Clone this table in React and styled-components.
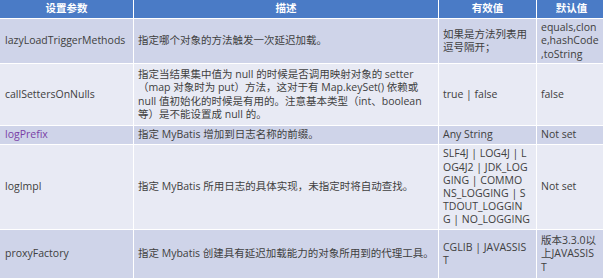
import React from "react";
import styled, { createGlobalStyle } from "styled-components";

const GlobalStyle = createGlobalStyle`
	html, body {
		margin: 0;
		padding: 0;
		background: #ffffff;
	}
`;

const Table = styled.div`
	display: grid;
	grid-template-columns: 133px 304px 97px 69px;
	grid-template-rows: 18px 44px 61px 18px 84px 48px;
	gap: 1px;
	width: 603px;
	background: #ffffff;
	font-family: "Open Sans", "Noto Sans CJK SC", sans-serif;
	font-size: 10.5px;
	line-height: 13.2px;
	color: #404040;
`;

const HeadCell = styled.div`
	display: flex;
	align-items: center;
	justify-content: center;
	background: #4a7bc6;
	color: #ffffff;
	font-weight: bold;
`;

const Cell = styled.div`
	display: flex;
	flex-direction: column;
	justify-content: center;
	padding: 0 4px 0 ${(p) => (p.$first ? "5px" : "4px")};
	overflow: hidden;
	white-space: nowrap;
	background: ${(p) => (p.$tone === "dark" ? "#cfd4e9" : "#e8eaf4")};
	color: ${(p) => (p.$link ? "#7a3fa6" : "#404040")};
`;

const Line = styled.span`
	display: block;
`;

const headers = ["设置参数", "描述", "有效值", "默认值"];

const rows = [
	{
		name: "lazyLoadTriggerMethods",
		desc: ["指定哪个对象的方法触发一次延迟加载。"],
		valid: ["如果是方法列表用", "逗号隔开；"],
		def: ["equals,clon", "e,hashCode", ",toString"],
		tone: "dark",
	},
	{
		name: "callSettersOnNulls",
		desc: [
			"指定当结果集中值为 null 的时候是否调用映射对象的 setter",
			"（map 对象时为 put）方法，这对于有 Map.keySet() 依赖或",
			"null 值初始化的时候是有用的。注意基本类型（int、boolean",
			"等）是不能设置成 null 的。",
		],
		valid: ["true | false"],
		def: ["false"],
		tone: "light",
	},
	{
		name: "logPrefix",
		link: true,
		desc: ["指定 MyBatis 增加到日志名称的前缀。"],
		valid: ["Any String"],
		def: ["Not set"],
		tone: "dark",
	},
	{
		name: "logImpl",
		desc: ["指定 MyBatis 所用日志的具体实现，未指定时将自动查找。"],
		valid: [
			"SLF4J | LOG4J | L",
			"OG4J2 | JDK_LOG",
			"GING | COMMO",
			"NS_LOGGING | S",
			"TDOUT_LOGGIN",
			"G | NO_LOGGING",
		],
		def: ["Not set"],
		tone: "light",
	},
	{
		name: "proxyFactory",
		desc: ["指定 Mybatis 创建具有延迟加载能力的对象所用到的代理工具。"],
		valid: ["CGLIB | JAVASSIS", "T"],
		def: ["版本3.3.0以", "上JAVASSIS", "T"],
		tone: "dark",
	},
];

function Lines({ items }) {
	return items.map((t, i) => <Line key={i}>{t}</Line>);
}

export default function App() {
	return (
		<>
			<GlobalStyle />
			<Table>
				{headers.map((h) => (
					<HeadCell key={h}>{h}</HeadCell>
				))}
				{rows.map((r) => (
					<React.Fragment key={r.name}>
						<Cell $tone={r.tone} $first $link={r.link}>
							{r.name}
						</Cell>
						<Cell $tone={r.tone}>
							<Lines items={r.desc} />
						</Cell>
						<Cell $tone={r.tone}>
							<Lines items={r.valid} />
						</Cell>
						<Cell $tone={r.tone}>
							<Lines items={r.def} />
						</Cell>
					</React.Fragment>
				))}
			</Table>
		</>
	);
}
